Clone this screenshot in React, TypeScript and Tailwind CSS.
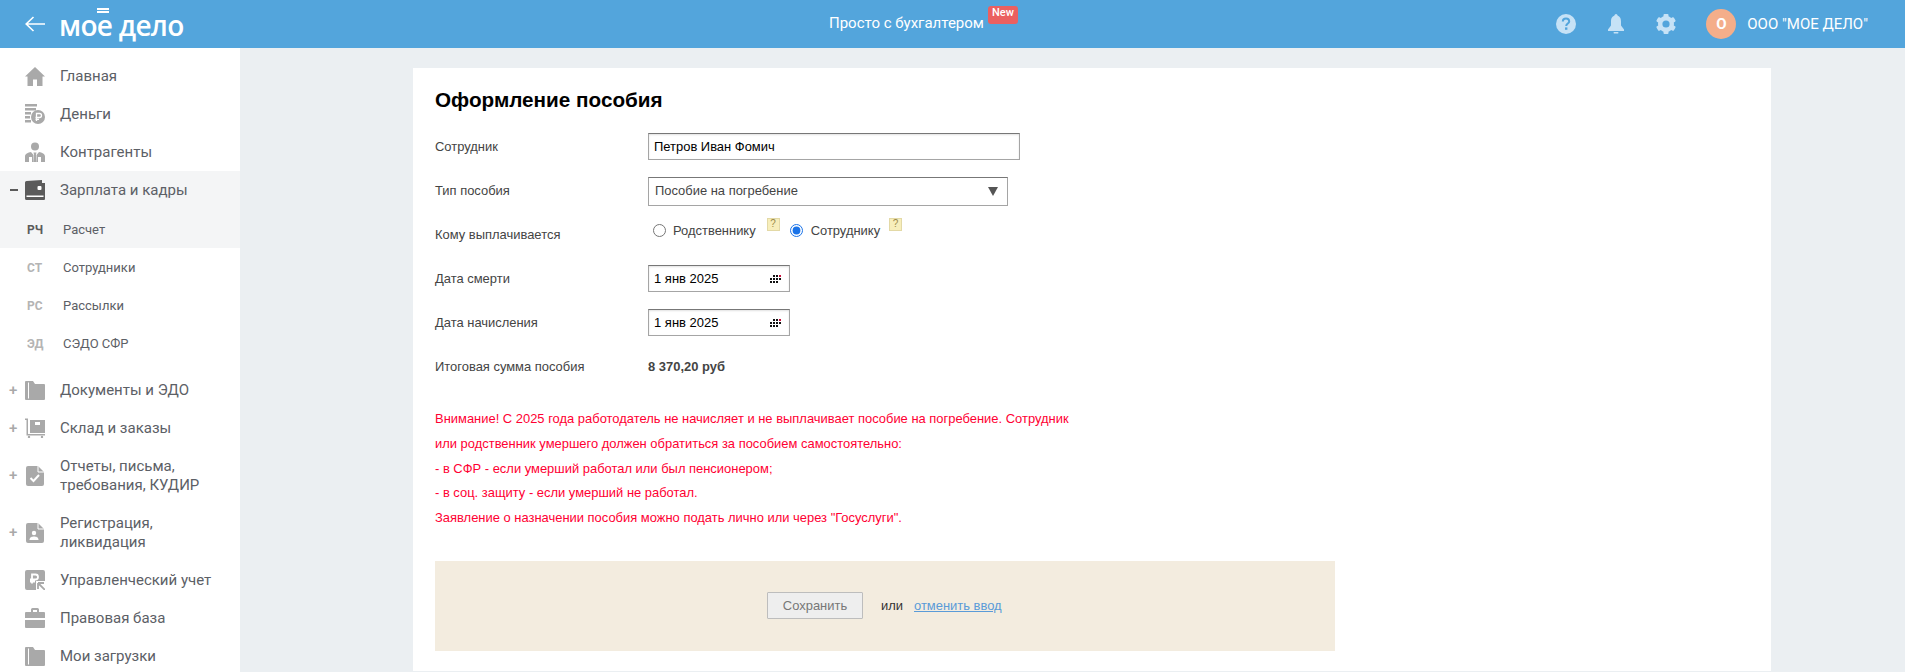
import React from 'react';

const HomeIcon = () => (
  <svg width="20" height="20" viewBox="0 0 20 20" fill="#a9a9a9">
    <path d="M10 1 L20 10.5 H17.5 V20 H12 V13.5 H8 V20 H2.5 V10.5 H0 Z" />
  </svg>
);

const MoneyIcon = () => (
  <svg width="20" height="20" viewBox="0 0 20 20" fill="#a9a9a9">
    <rect x="0" y="0" width="12" height="2.5" />
    <rect x="0" y="4" width="11" height="2.5" />
    <rect x="0" y="8" width="6" height="2.5" />
    <rect x="0" y="12" width="5" height="2.5" />
    <rect x="0" y="16" width="6" height="2.5" />
    <circle cx="13" cy="13" r="7" />
    <path d="M11.5 17V9.5H14.5a2 2 0 0 1 0 4H10.5M10.5 15.3H14" fill="none" stroke="#fff" strokeWidth="1.3" />
  </svg>
);

const AgentIcon = () => (
  <svg width="20" height="20" viewBox="0 0 20 20" fill="#a9a9a9">
    <circle cx="10" cy="4.5" r="4" />
    <path d="M0 20V14.5C0 12 3 10.5 6 10L8.5 13 8 20H7V15H4V20ZM20 20V14.5C20 12 17 10.5 14 10L11.5 13 12 20H13V15H16V20Z" />
    <path d="M8.5 10.5h3L11 12.5 11.8 20H8.2L9 12.5Z" />
  </svg>
);

const WalletIcon = () => (
  <svg width="20" height="20" viewBox="0 0 20 20">
    <path d="M1.5 1 L17 0 V3 H20 V19 A1 1 0 0 1 19 20 H1.5 A1.5 1.5 0 0 1 0 18.5 V2.5 A1.5 1.5 0 0 1 1.5 1Z" fill="#5b5b5b" />
    <rect x="1.5" y="15.5" width="17" height="1.5" fill="#fff" />
    <rect x="12.5" y="6" width="4" height="4" rx="1" fill="#fff" />
  </svg>
);

const FolderIcon = () => (
  <svg width="20" height="20" viewBox="0 0 20 20" fill="#a9a9a9">
    <path d="M1 1H8L10 4H19A1 1 0 0 1 20 5V19A1 1 0 0 1 19 20H1A1 1 0 0 1 0 19V2A1 1 0 0 1 1 1Z" />
    <rect x="3" y="2.5" width="1" height="16" fill="#fff" />
  </svg>
);

const StockIcon = () => (
  <svg width="20" height="20" viewBox="0 0 20 20" fill="#a9a9a9">
    <path d="M0 .5H3V16H20V17.5H1.5V2H0Z" />
    <rect x="5" y="2" width="15" height="13" />
    <rect x="10" y="4" width="5" height="3" fill="#fff" />
    <circle cx="4" cy="19" r="1.2" />
    <circle cx="17" cy="19" r="1.2" />
  </svg>
);

const ReportIcon = () => (
  <svg width="18" height="20" viewBox="0 0 18 20" fill="#a9a9a9" className="ml-[1px]">
    <path d="M2 0H12L18 6V18A2 2 0 0 1 16 20H2A2 2 0 0 1 0 18V2A2 2 0 0 1 2 0Z" />
    <path d="M12 0V6H18" fill="none" stroke="#fff" strokeWidth="1" />
    <path d="M4.5 12L7.5 15 13 9" fill="none" stroke="#fff" strokeWidth="2" />
  </svg>
);

const RegIcon = () => (
  <svg width="18" height="20" viewBox="0 0 18 20" fill="#a9a9a9" className="ml-[1px]">
    <path d="M2 0H12L18 6V18A2 2 0 0 1 16 20H2A2 2 0 0 1 0 18V2A2 2 0 0 1 2 0Z" />
    <path d="M12 0V6H18" fill="none" stroke="#fff" strokeWidth="1" />
    <circle cx="8" cy="10" r="2.2" fill="#fff" />
    <path d="M3.5 17C3.5 14 6 13.5 8 13.5S12.5 14 12.5 17Z" fill="#fff" />
  </svg>
);

const ManageIcon = () => (
  <svg width="20" height="20" viewBox="0 0 20 20" fill="#a9a9a9">
    <path d="M2 0H18A2 2 0 0 1 20 2V11H11V20H2A2 2 0 0 1 0 18V2A2 2 0 0 1 2 0Z" />
    <path d="M7 13.5V4.5H10.5A2.5 2.5 0 0 1 10.5 9.5H5M5 11.5H10" fill="none" stroke="#fff" strokeWidth="1.8" />
    <path d="M13 13H19M13 13V19M13 13L20 20" fill="none" stroke="#a9a9a9" strokeWidth="1.8" />
  </svg>
);

const CaseIcon = () => (
  <svg width="20" height="20" viewBox="0 0 20 20" fill="#a9a9a9">
    <path d="M6 4V1.5A1.5 1.5 0 0 1 7.5 0H12.5A1.5 1.5 0 0 1 14 1.5V4H12V2H8V4Z" />
    <path d="M1 4H19A1 1 0 0 1 20 5V10H0V5A1 1 0 0 1 1 4Z" />
    <path d="M0 12H20V19A1 1 0 0 1 19 20H1A1 1 0 0 1 0 19Z" />
  </svg>
);

const NavRow = ({
  icon,
  mark,
  children,
  tall,
}: {
  icon: React.ReactNode;
  mark?: string;
  children: React.ReactNode;
  tall?: boolean;
}) => (
  <div className={`flex items-center ${tall ? 'h-[57px]' : 'h-[38px]'}`}>
    <span className="w-[25px] pl-[9px] text-[15px] leading-none text-[#a9a9a9] font-medium">
      {mark === '-' ? <span className="block ml-[1px] w-[8px] h-[2px] bg-[#5b5b5b]" /> : mark}
    </span>
    <span className="flex w-[35px] shrink-0 items-center">{icon}</span>
    <span className="text-[15px] leading-[19px]">{children}</span>
  </div>
);

const SubRow = ({ code, label, active }: { code: string; label: string; active?: boolean }) => (
  <div className={`flex items-center pt-[2px] ${active ? 'h-[39px]' : 'h-[38px]'}`}>
    <span className={`ml-[27px] w-[36px] text-[12px] font-bold ${active ? 'text-[#5b5b5b]' : 'text-[#b4b4b4]'}`}>{code}</span>
    <span className="text-[13px]">{label}</span>
  </div>
);

const HelpMark = ({ gap }: { gap: string }) => (
  <span className={`${gap} mt-[-13px] flex h-[13px] w-[13px] items-center justify-center border border-[#e3d9a6] bg-[#f7eebb] text-[10px] leading-none text-[#9a8a4a]`}>
    ?
  </span>
);

const Radio = ({ on }: { on?: boolean }) => (
  <input type="radio" readOnly checked={!!on} className="m-0 h-[13px] w-[13px] accent-[#1a73e8]" />
);

const CalendarDots = () => (
  <svg width="11" height="8" viewBox="0 0 11 8" className="shrink-0">
    <g fill="#111">
      <rect x="3" y="0" width="2" height="2" />
      <rect x="6" y="0" width="2" height="2" />
      <rect x="0" y="3" width="2" height="2" />
      <rect x="3" y="3" width="2" height="2" />
      <rect x="6" y="3" width="2" height="2" />
      <rect x="9" y="3" width="2" height="2" />
      <rect x="0" y="6" width="2" height="2" />
      <rect x="3" y="6" width="2" height="2" />
      <rect x="6" y="6" width="2" height="2" />
    </g>
    <rect x="9" y="0" width="2" height="2" fill="#c8103c" />
  </svg>
);

const DateField = ({ value }: { value: string }) => (
  <div className="flex h-[27px] w-[142px] items-center justify-between border border-[#a5a5a5] border-t-[#777] pl-[5px] pr-[8px] shadow-[inset_0_1px_2px_rgba(0,0,0,0.12)]">
    <span className="text-[13px] text-black">{value}</span>
    <CalendarDots />
  </div>
);

export default function App() {
  return (
    <div className="flex h-screen flex-col overflow-hidden bg-[#ebeff2] font-['Roboto',sans-serif]">
      <header className="relative flex h-[48px] shrink-0 items-center bg-[#53a5dc] text-white">
        <svg width="20" height="16" viewBox="0 0 20 16" className="ml-[25px]" fill="none" stroke="#fff" strokeWidth="1.6">
          <path d="M20 8H1M8.5 1L1.2 8 8.5 15" />
        </svg>
        <div className="relative ml-[14px] mt-[1px] font-['Open_Sans',sans-serif] text-[28px] font-semibold leading-none tracking-[-0.7px]">
          <span>мое дело</span>
          <span className="absolute left-[38px] top-[-3px] flex w-[12px] flex-col gap-[1px]">
            <span className="h-[2px] bg-white" />
            <span className="h-[2px] bg-white" />
          </span>
        </div>
        <div className="absolute left-[829px] top-[14px] text-[15px] leading-[18px]">Просто с бухгалтером</div>
        <div className="absolute left-[988px] top-[6px] flex h-[18px] w-[30px] items-center justify-center rounded-[3px] bg-[#eb6060] pb-[3px] text-[11px] font-medium">
          New
        </div>
        <div className="ml-auto flex items-center pr-[37px]">
          <svg width="20" height="20" viewBox="0 0 20 20">
            <circle cx="10" cy="10" r="10" fill="#c6e2f6" />
            <path d="M6.8 7.6C6.8 5.8 8.2 4.6 10 4.6S13.2 5.8 13.2 7.4C13.2 9.4 10.2 9.6 10.2 12" fill="none" stroke="#53a5dc" strokeWidth="2" />
            <rect x="9" y="13.4" width="2.4" height="2.4" fill="#53a5dc" />
          </svg>
          <svg width="16" height="20" viewBox="0 0 16 20" className="ml-[32px]" fill="#c6e2f6">
            <circle cx="8" cy="1.5" r="1.5" />
            <path d="M8 1.5C11.5 1.5 13 4 13 7.5V11.5L16 15.5V17H0V15.5L3 11.5V7.5C3 4 4.5 1.5 8 1.5Z" />
            <rect x="5.5" y="18" width="5" height="1.5" rx="0.7" />
          </svg>
          <svg width="20" height="20" viewBox="0 0 20 20" className="ml-[32px]">
            <g fill="#c6e2f6">
              <circle cx="10" cy="10" r="8" />
              <rect x="7.5" y="0" width="5" height="20" rx="1" />
              <rect x="7.5" y="0" width="5" height="20" rx="1" transform="rotate(60 10 10)" />
              <rect x="7.5" y="0" width="5" height="20" rx="1" transform="rotate(120 10 10)" />
            </g>
            <circle cx="10" cy="10" r="3.6" fill="#53a5dc" />
          </svg>
          <span className="ml-[30px] flex h-[30px] w-[30px] items-center justify-center rounded-full bg-[#f4ae8a] text-[15px] font-bold">
            О
          </span>
          <span className="ml-[11px] text-[15px] font-normal">ООО "МОЕ ДЕЛО"</span>
        </div>
      </header>

      <div className="flex min-h-0 flex-1">
        <aside className="w-[240px] shrink-0 bg-white pt-[9px] text-[#5c6066]">
          <NavRow icon={<HomeIcon />}>Главная</NavRow>
          <NavRow icon={<MoneyIcon />}>Деньги</NavRow>
          <NavRow icon={<AgentIcon />}>Контрагенты</NavRow>
          <div className="bg-[#f4f5f6]">
            <NavRow icon={<WalletIcon />} mark="-">
              Зарплата и кадры
            </NavRow>
            <SubRow code="РЧ" label="Расчет" active />
          </div>
          <SubRow code="СТ" label="Сотрудники" />
          <SubRow code="РС" label="Рассылки" />
          <SubRow code="ЭД" label="СЭДО СФР" />
          <div className="h-[9px]" />
          <NavRow icon={<FolderIcon />} mark="+">Документы и ЭДО</NavRow>
          <NavRow icon={<StockIcon />} mark="+">Склад и заказы</NavRow>
          <NavRow icon={<ReportIcon />} mark="+" tall>
            Отчеты, письма,
            <br />
            требования, КУДИР
          </NavRow>
          <NavRow icon={<RegIcon />} mark="+" tall>
            Регистрация,
            <br />
            ликвидация
          </NavRow>
          <NavRow icon={<ManageIcon />}>Управленческий учет</NavRow>
          <NavRow icon={<CaseIcon />}>Правовая база</NavRow>
          <NavRow icon={<FolderIcon />}>Мои загрузки</NavRow>
        </aside>

        <main className="min-w-0 flex-1 pl-[173px] pt-[20px]">
          <div className="h-[603px] w-[1358px] bg-white pl-[22px] pt-[20px] font-['Liberation_Sans',Arial,sans-serif] text-[12.95px] text-[#444]">
            <h1 className="h-[24px] text-[20.7px] font-bold leading-[24px] text-black">Оформление пособия</h1>

            <div className="mt-[21px] flex h-[27px] items-center">
              <label className="w-[213px]">Сотрудник</label>
              <input
                readOnly
                value="Петров Иван Фомич"
                className="h-[27px] w-[372px] border border-[#a5a5a5] border-t-[#777] px-[5px] text-[12.95px] text-black shadow-[inset_0_1px_2px_rgba(0,0,0,0.12)] outline-none"
              />
            </div>

            <div className="mt-[17px] flex h-[29px] items-center">
              <label className="mb-[2px] w-[213px]">Тип пособия</label>
              <div className="flex h-[29px] w-[360px] items-center justify-between border border-[#a5a5a5] border-t-[#777] pb-[1px] pl-[6px] pr-[9px]">
                <span>Пособие на погребение</span>
                <span className="h-0 w-0 border-x-[5px] border-t-[9px] border-x-transparent border-t-[#555]" />
              </div>
            </div>

            <div className="mt-[15px] flex h-[20px] items-center">
              <label className="mt-[8px] w-[213px]">Кому выплачивается</label>
              <div className="flex items-center pl-[5px]">
                <Radio />
                <span className="ml-[7px]">Родственнику</span>
                <HelpMark gap="ml-[11px]" />
                <span className="ml-[10px] flex items-center">
                  <Radio on />
                </span>
                <span className="ml-[8px]">Сотруднику</span>
                <HelpMark gap="ml-[9px]" />
              </div>
            </div>

            <div className="mt-[24px] flex h-[27px] items-center">
              <label className="w-[213px]">Дата смерти</label>
              <DateField value="1 янв 2025" />
            </div>

            <div className="mt-[17px] flex h-[27px] items-center">
              <label className="w-[213px]">Дата начисления</label>
              <DateField value="1 янв 2025" />
            </div>

            <div className="mt-[22px] flex h-[18px] items-center">
              <label className="w-[213px]">Итоговая сумма пособия</label>
              <span className="font-bold">8 370,20 руб</span>
            </div>

            <div className="mt-[31px] text-[#ff0033] [&>p]:h-[24.75px] [&>p]:leading-[24.75px]">
              <p>Внимание! С 2025 года работодатель не начисляет и не выплачивает пособие на погребение. Сотрудник</p>
              <p>или родственник умершего должен обратиться за пособием самостоятельно:</p>
              <p>- в СФР - если умерший работал или был пенсионером;</p>
              <p>- в соц. защиту - если умерший не работал.</p>
              <p>Заявление о назначении пособия можно подать лично или через "Госуслуги".</p>
            </div>

            <div className="mt-[30px] flex h-[90px] w-[900px] items-center bg-[#f3ecdf] pl-[332px]">
              <button className="h-[27px] w-[96px] rounded-[1px] border border-[#bdbdbd] bg-[#eeeeee] pb-[1px] text-[12.95px] text-[#777]">
                Сохранить
              </button>
              <span className="ml-[18px] text-[#333]">или</span>
              <a className="ml-[11px] text-[#5a9bd8] underline">отменить ввод</a>
            </div>
          </div>
        </main>
      </div>
    </div>
  );
}
